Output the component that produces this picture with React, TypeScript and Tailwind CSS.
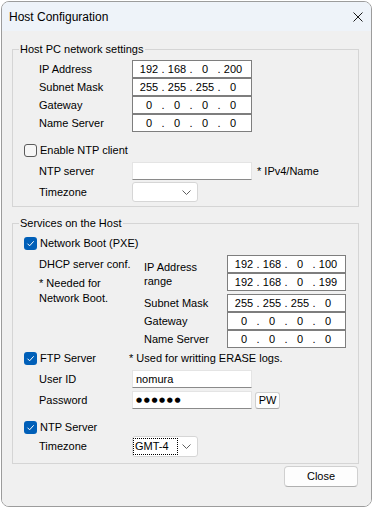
import React from 'react';

const Check = ({ checked }: { checked?: boolean }) =>
  checked ? (
    <span className="flex h-[13px] w-[13px] shrink-0 items-center justify-center rounded-[3px] bg-[#005fb8]">
      <svg width="9" height="9" viewBox="0 0 9 9">
        <path d="M1.5 4.7 L3.6 6.8 L7.7 2.3" stroke="white" strokeWidth="1" fill="none" />
      </svg>
    </span>
  ) : (
    <span className="h-[13px] w-[13px] shrink-0 rounded-[3px] border border-[#5a5a5a] bg-[#f6f6f6]" />
  );

const Chevron = () => (
  <svg width="9" height="5" viewBox="0 0 9 5" className="ml-auto mr-[6px]">
    <path d="M0.5 0.5 L4.5 4.5 L8.5 0.5" stroke="#5f5f5f" strokeWidth="1" fill="none" />
  </svg>
);

// classic IP address control: four octets with dots between
const IpField = ({ parts, w = 'w-[120px]' }: { parts: string[]; w?: string }) => (
  <div className={`flex h-[18px] ${w} items-center border border-[#7e7e7e] bg-white pl-[4px] text-[11px]`}>
    {parts.map((p, i) => (
      <React.Fragment key={i}>
        {i > 0 && <span className="w-[4px] text-center">.</span>}
        <span className="w-[24px] text-center">{p}</span>
      </React.Fragment>
    ))}
  </div>
);

const TextBox = ({ children }: { children?: React.ReactNode }) => (
  <div className="flex h-[18px] w-[120px] items-center border border-[#e4e4e4] border-b-[#8a8a8a] bg-white px-[3px] text-[11px]">
    {children}
  </div>
);

const Label = ({ children, w = 'w-[93px]' }: { children: React.ReactNode; w?: string }) => (
  <span className={`${w} shrink-0 text-[11px]`}>{children}</span>
);

export default function App() {
  return (
    <div className="min-h-screen bg-white pl-[1px] pt-[1px] font-['Liberation_Sans',sans-serif] text-black">
      <div className="flex h-[506px] w-[371px] flex-col overflow-hidden rounded-[8px] border border-[#9c9c9c]">
        {/* title bar */}
        <div className="flex h-[29px] shrink-0 items-center bg-[#eef3f9] pl-[7px]">
          <span className="text-[12px]">Host Configuration</span>
          <svg width="10" height="10" viewBox="0 0 10 10" className="ml-auto mr-[8px]">
            <path d="M0.5 0.5 L9.5 9.5 M9.5 0.5 L0.5 9.5" stroke="#1a1a1a" strokeWidth="1" />
          </svg>
        </div>

        <div className="flex-1 bg-[#f0f0f0] pl-[10px] pt-[12px]">
          {/* Host PC network settings */}
          <fieldset className="w-[347px] border border-[#d5d5d5] pb-[4px] pl-[11px]">
            <legend className="ml-[-5px] px-[1px] text-[11px] leading-[13px]">Host PC network settings</legend>
            <div className="pt-[4px]">
              {[
                ['IP Address', ['192', '168', '0', '200']],
                ['Subnet Mask', ['255', '255', '255', '0']],
                ['Gateway', ['0', '0', '0', '0']],
                ['Name Server', ['0', '0', '0', '0']],
              ].map(([label, parts]) => (
                <div key={label as string} className="ml-[15px] flex h-[18px] items-center">
                  <Label>{label as string}</Label>
                  <IpField parts={parts as string[]} />
                </div>
              ))}
            </div>
            <div className="mt-[10px] flex h-[16px] items-center gap-[3px]">
              <Check />
              <span className="text-[11px]">Enable NTP client</span>
            </div>
            <div className="ml-[15px] mt-[4px] flex h-[18px] items-center">
              <Label>NTP server</Label>
              <TextBox />
              <span className="ml-[5px] text-[11px]">* IPv4/Name</span>
            </div>
            <div className="ml-[15px] mt-[2px] flex h-[20px] items-center">
              <Label>Timezone</Label>
              <div className="flex h-[20px] w-[66px] items-center rounded-[3px] border border-[#d6d6d6] bg-white">
                <Chevron />
              </div>
            </div>
          </fieldset>

          {/* Services on the Host */}
          <fieldset className="mt-[10px] w-[347px] border border-[#d5d5d5] pb-[6px] pl-[11px]">
            <legend className="ml-[-5px] px-[1px] text-[11px] leading-[13px]">Services on the Host</legend>
            <div className="mt-[5px] flex h-[16px] items-center gap-[3px]">
              <Check checked />
              <span className="text-[11px]">Network Boot (PXE)</span>
            </div>

            <div className="ml-[15px] mt-[4px] flex">
              <div className="w-[105px] shrink-0 text-[11px]">
                <div className="mt-[1px] leading-[16px]">DHCP server conf.</div>
                <div className="mt-[4px] leading-[15px]">
                  * Needed for
                  <br />
                  Network Boot.
                </div>
              </div>
              <div>
                <div className="flex">
                  <span className="w-[83px] pt-[5px] text-[11px] leading-[14px]">
                    IP Address
                    <br />
                    range
                  </span>
                  <div>
                    <IpField parts={['192', '168', '0', '100']} w="w-[119px]" />
                    <IpField parts={['192', '168', '0', '199']} w="w-[119px]" />
                  </div>
                </div>
                <div className="mt-[3px]">
                  {[
                    ['Subnet Mask', ['255', '255', '255', '0']],
                    ['Gateway', ['0', '0', '0', '0']],
                    ['Name Server', ['0', '0', '0', '0']],
                  ].map(([label, parts]) => (
                    <div key={label as string} className="flex h-[18px] items-center">
                      <Label w="w-[83px]">{label as string}</Label>
                      <IpField parts={parts as string[]} w="w-[119px]" />
                    </div>
                  ))}
                </div>
              </div>
            </div>

            <div className="mt-[2px] flex h-[16px] items-center">
              <div className="flex w-[105px] items-center gap-[3px]">
                <Check checked />
                <span className="text-[11px]">FTP Server</span>
              </div>
              <span className="text-[11px]">* Used for writting ERASE logs.</span>
            </div>
            <div className="ml-[15px] mt-[4px] flex h-[18px] items-center">
              <Label>User ID</Label>
              <TextBox>nomura</TextBox>
            </div>
            <div className="ml-[15px] mt-[3px] flex h-[18px] items-center">
              <Label>Password</Label>
              <TextBox>
                <span className="font-['DejaVu_Sans',sans-serif] text-[7px] tracking-[1.6px]">●●●●●●</span>
              </TextBox>
              <button className="ml-[3px] flex h-[17px] w-[25px] items-center justify-center rounded-[3px] border border-[#cfcfcf] border-b-[#a8a8a8] bg-[#fdfdfd] text-[11px]">
                PW
              </button>
            </div>
            <div className="mt-[10px] flex h-[16px] items-center gap-[3px]">
              <Check checked />
              <span className="text-[11px]">NTP Server</span>
            </div>
            <div className="ml-[15px] mt-[1px] flex h-[21px] items-center">
              <Label>Timezone</Label>
              <div className="flex h-[21px] w-[66px] items-center rounded-[3px] border border-[#d6d6d6] bg-white">
                <span className="flex h-[17px] w-[45px] items-center border border-dotted border-black pl-[1px] text-[11px]">
                  GMT-4
                </span>
                <Chevron />
              </div>
            </div>
          </fieldset>

          <div className="mt-[2px] flex w-[347px] justify-end pr-[1px]">
            <button className="flex h-[21px] w-[74px] items-center justify-center rounded-[4px] border border-[#d0d0d0] border-b-[#b0b0b0] bg-[#fdfdfd] text-[11px]">
              Close
            </button>
          </div>
        </div>
      </div>
    </div>
  );
}
